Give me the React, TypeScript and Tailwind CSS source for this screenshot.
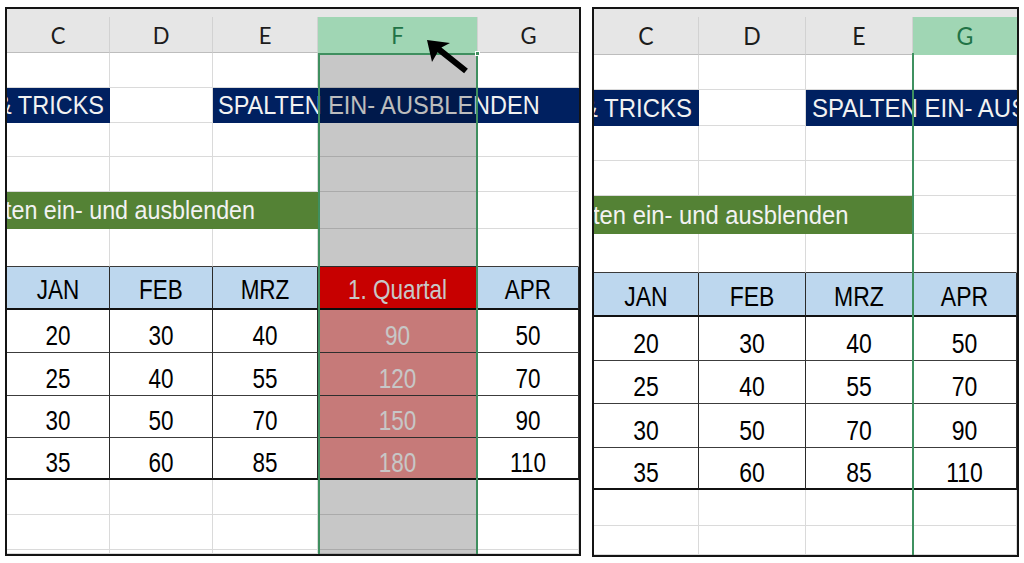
import React from "react";

function B({ dark }: { dark?: boolean }) {
  return (
    <div
      className={
        dark
          ? "border-b border-r border-b-[#3a3a3a] border-r-[#dadada]"
          : "border-b border-r border-[#dadada]"
      }
    />
  );
}

function ColHead({ label, sel, last, big }: { label: string; sel?: boolean; last?: boolean; big?: boolean }) {
  return (
    <div
      className={`flex items-center justify-center border-b font-['Lato',sans-serif] ${
        sel ? "bg-[#a0d6b4] border-b-[#a0d6b4] text-[#217346]" : "bg-[#e6e6e6] border-b-[#bdbdbd] text-[#1c1c1c]"
      } ${last ? "" : "border-r border-r-[#d2d2d2]"} ${big ? "text-[23px]" : "text-[22px]"}`}
    >
      <span className="inline-block scale-y-[1.05] pt-[2px]">{label}</span>
    </div>
  );
}

function TH({ label, red, big }: { label: string; red?: boolean; big?: boolean }) {
  return (
    <div
      className={`flex items-center justify-center border-b-2 border-r border-b-[#111111] border-r-[#2a2a2a] pt-[5px] font-['Liberation_Sans',Arial,sans-serif] ${
        red ? "bg-[#ff0000] text-white" : "bg-[#bdd7ee] text-black"
      } ${big ? "text-[23px]" : "text-[22.5px]"}`}
    >
      <span className="inline-block scale-y-[1.22]">{label}</span>
    </div>
  );
}

function TD({ v, last, pink, big }: { v: string; last?: boolean; pink?: boolean; big?: boolean }) {
  return (
    <div
      className={`flex items-center justify-center border-r border-r-[#2a2a2a] pt-[9px] font-['Liberation_Sans',Arial,sans-serif] ${
        last ? "border-b-2 border-b-[#111111]" : "border-b border-b-[#3c3c3c]"
      } ${pink ? "bg-[#fe9d9b] text-white" : "bg-white text-black"} ${big ? "text-[23px]" : "text-[22.5px]"}`}
    >
      <span className="inline-block scale-y-[1.22]">{v}</span>
    </div>
  );
}

function LeftPanel() {
  const rows: string[][] = [
    ["20", "30", "40", "90", "50"],
    ["25", "40", "55", "120", "70"],
    ["30", "50", "70", "150", "90"],
    ["35", "60", "85", "180", "110"],
  ];
  return (
    <div className="relative w-[576px] shrink-0 overflow-hidden border-2 border-[#141414] bg-white">
      <div className="grid grid-cols-[103px_103px_105px_160px_101px] grid-rows-[8px_36px_35px_35px_34px_35px_37px_38px_43px_43px_43px_42px_42px_35px_35px_4px]">
        <div className="col-span-5 bg-[#e6e6e6]" />
        <ColHead label="C" />
        <ColHead label="D" />
        <ColHead label="E" />
        <ColHead label="F" sel />
        <ColHead label="G" last />
        {/* r1 */}
        <B /><B /><B /><B /><B />
        {/* r2 */}
        <div className="flex items-center justify-end overflow-hidden whitespace-nowrap bg-[#002060] pr-[6px] font-['Liberation_Sans',Arial,sans-serif] text-[23.5px] text-[#f2f2f2]">
          <span className="inline-block shrink-0 scale-y-[1.08]">TIPPS &amp; TRICKS</span>
        </div>
        <B />
        <div className="col-span-3 flex items-center overflow-hidden whitespace-nowrap bg-[#002060] pl-[5px] font-['Liberation_Sans',Arial,sans-serif] text-[23.5px] text-[#f2f2f2]">
          <span className="inline-block shrink-0 scale-y-[1.08]">SPALTEN EIN- AUSBLENDEN</span>
        </div>
        {/* r3 */}
        <B /><B /><B /><B /><B />
        {/* r4 */}
        <B /><B /><B /><B /><B />
        {/* r5 */}
        <div className="col-span-3 flex items-center overflow-hidden whitespace-nowrap bg-[#548235] font-['Liberation_Sans',Arial,sans-serif] text-[23.3px] text-[#f2f2f2]">
          <span className="-ml-[2px] inline-block shrink-0 scale-y-[1.08]">ten ein- und ausblenden</span>
        </div>
        <B /><B />
        {/* r6 */}
        <B dark /><B dark /><B dark /><B dark /><B dark />
        {/* r7 */}
        <TH label="JAN" />
        <TH label="FEB" />
        <TH label="MRZ" />
        <TH label="1. Quartal" red />
        <TH label="APR" />
        {rows.map((r, i) => (
          <React.Fragment key={i}>
            {r.map((v, j) => (
              <TD key={j} v={v} last={i === 3} pink={j === 3} />
            ))}
          </React.Fragment>
        ))}
        <B /><B /><B /><B /><B />
        <B /><B /><B /><B /><B />
        <B /><B /><B /><B /><B />
      </div>
      {/* selection overlay on column F */}
      <div className="absolute bottom-0 left-[311px] top-[44px] w-[160px] border-x-2 border-t-2 border-[#3f8f5f] bg-[rgba(0,0,0,0.22)]" />
      <div className="absolute left-[468px] top-[42px] h-[5px] w-[5px] border border-white bg-[#3f8f5f]" />
    </div>
  );
}

function RightPanel() {
  const rows: string[][] = [
    ["20", "30", "40", "50"],
    ["25", "40", "55", "70"],
    ["30", "50", "70", "90"],
    ["35", "60", "85", "110"],
  ];
  return (
    <div className="relative w-[427px] shrink-0 overflow-hidden border-2 border-[#141414] bg-white">
      <div className="grid grid-cols-[105px_107px_107px_104px] grid-rows-[8px_38px_35px_36px_35px_35px_38px_39px_44px_44px_43px_44px_42px_36px_29px]">
        <div className="col-span-4 bg-[#e6e6e6]" />
        <ColHead label="C" big />
        <ColHead label="D" big />
        <ColHead label="E" big />
        <ColHead label="G" sel last big />
        {/* r1 */}
        <B /><B /><B /><B />
        {/* r2 */}
        <div className="flex items-center justify-end overflow-hidden whitespace-nowrap bg-[#002060] pr-[7px] font-['Liberation_Sans',Arial,sans-serif] text-[24px] text-[#f2f2f2]">
          <span className="inline-block shrink-0 scale-y-[1.08]">TIPPS &amp; TRICKS</span>
        </div>
        <B />
        <div className="col-span-2 flex items-center overflow-hidden whitespace-nowrap bg-[#002060] pl-[6px] font-['Liberation_Sans',Arial,sans-serif] text-[24px] text-[#f2f2f2]">
          <span className="inline-block shrink-0 scale-y-[1.08]">SPALTEN EIN- AUSBLENDEN</span>
        </div>
        {/* r3 */}
        <B /><B /><B /><B />
        {/* r4 */}
        <B /><B /><B /><B />
        {/* r5 */}
        <div className="col-span-3 flex items-center overflow-hidden whitespace-nowrap bg-[#548235] font-['Liberation_Sans',Arial,sans-serif] text-[23.8px] text-[#f2f2f2]">
          <span className="-ml-[1px] inline-block shrink-0 scale-y-[1.08]">ten ein- und ausblenden</span>
        </div>
        <B />
        {/* r6 */}
        <B dark /><B dark /><B dark /><B dark />
        {/* r7 */}
        <TH label="JAN" big />
        <TH label="FEB" big />
        <TH label="MRZ" big />
        <TH label="APR" big />
        {rows.map((r, i) => (
          <React.Fragment key={i}>
            {r.map((v, j) => (
              <TD key={j} v={v} last={i === 3} big />
            ))}
          </React.Fragment>
        ))}
        <B /><B /><B /><B />
        <B /><B /><B /><B />
      </div>
      {/* hidden column marker line */}
      <div className="absolute bottom-0 left-[318px] top-[44px] w-[2px] bg-[#3f9160]" />
    </div>
  );
}

export default function App() {
  return (
    <div className="relative h-[563px] w-[1024px] overflow-hidden bg-white">
      <div className="flex items-start gap-[11px] pl-[5px] pt-[7px]">
        <LeftPanel />
        <RightPanel />
      </div>
      <svg
        className="pointer-events-none absolute left-[420px] top-[35px] h-[45px] w-[55px]"
        viewBox="420 35 55 45"
      >
        <polygon
          points="427,40 432,62 437.6,52.3 464.1,73.3 467.9,68.7 441.4,47.6 450,43"
          fill="#000"
        />
      </svg>
    </div>
  );
}
